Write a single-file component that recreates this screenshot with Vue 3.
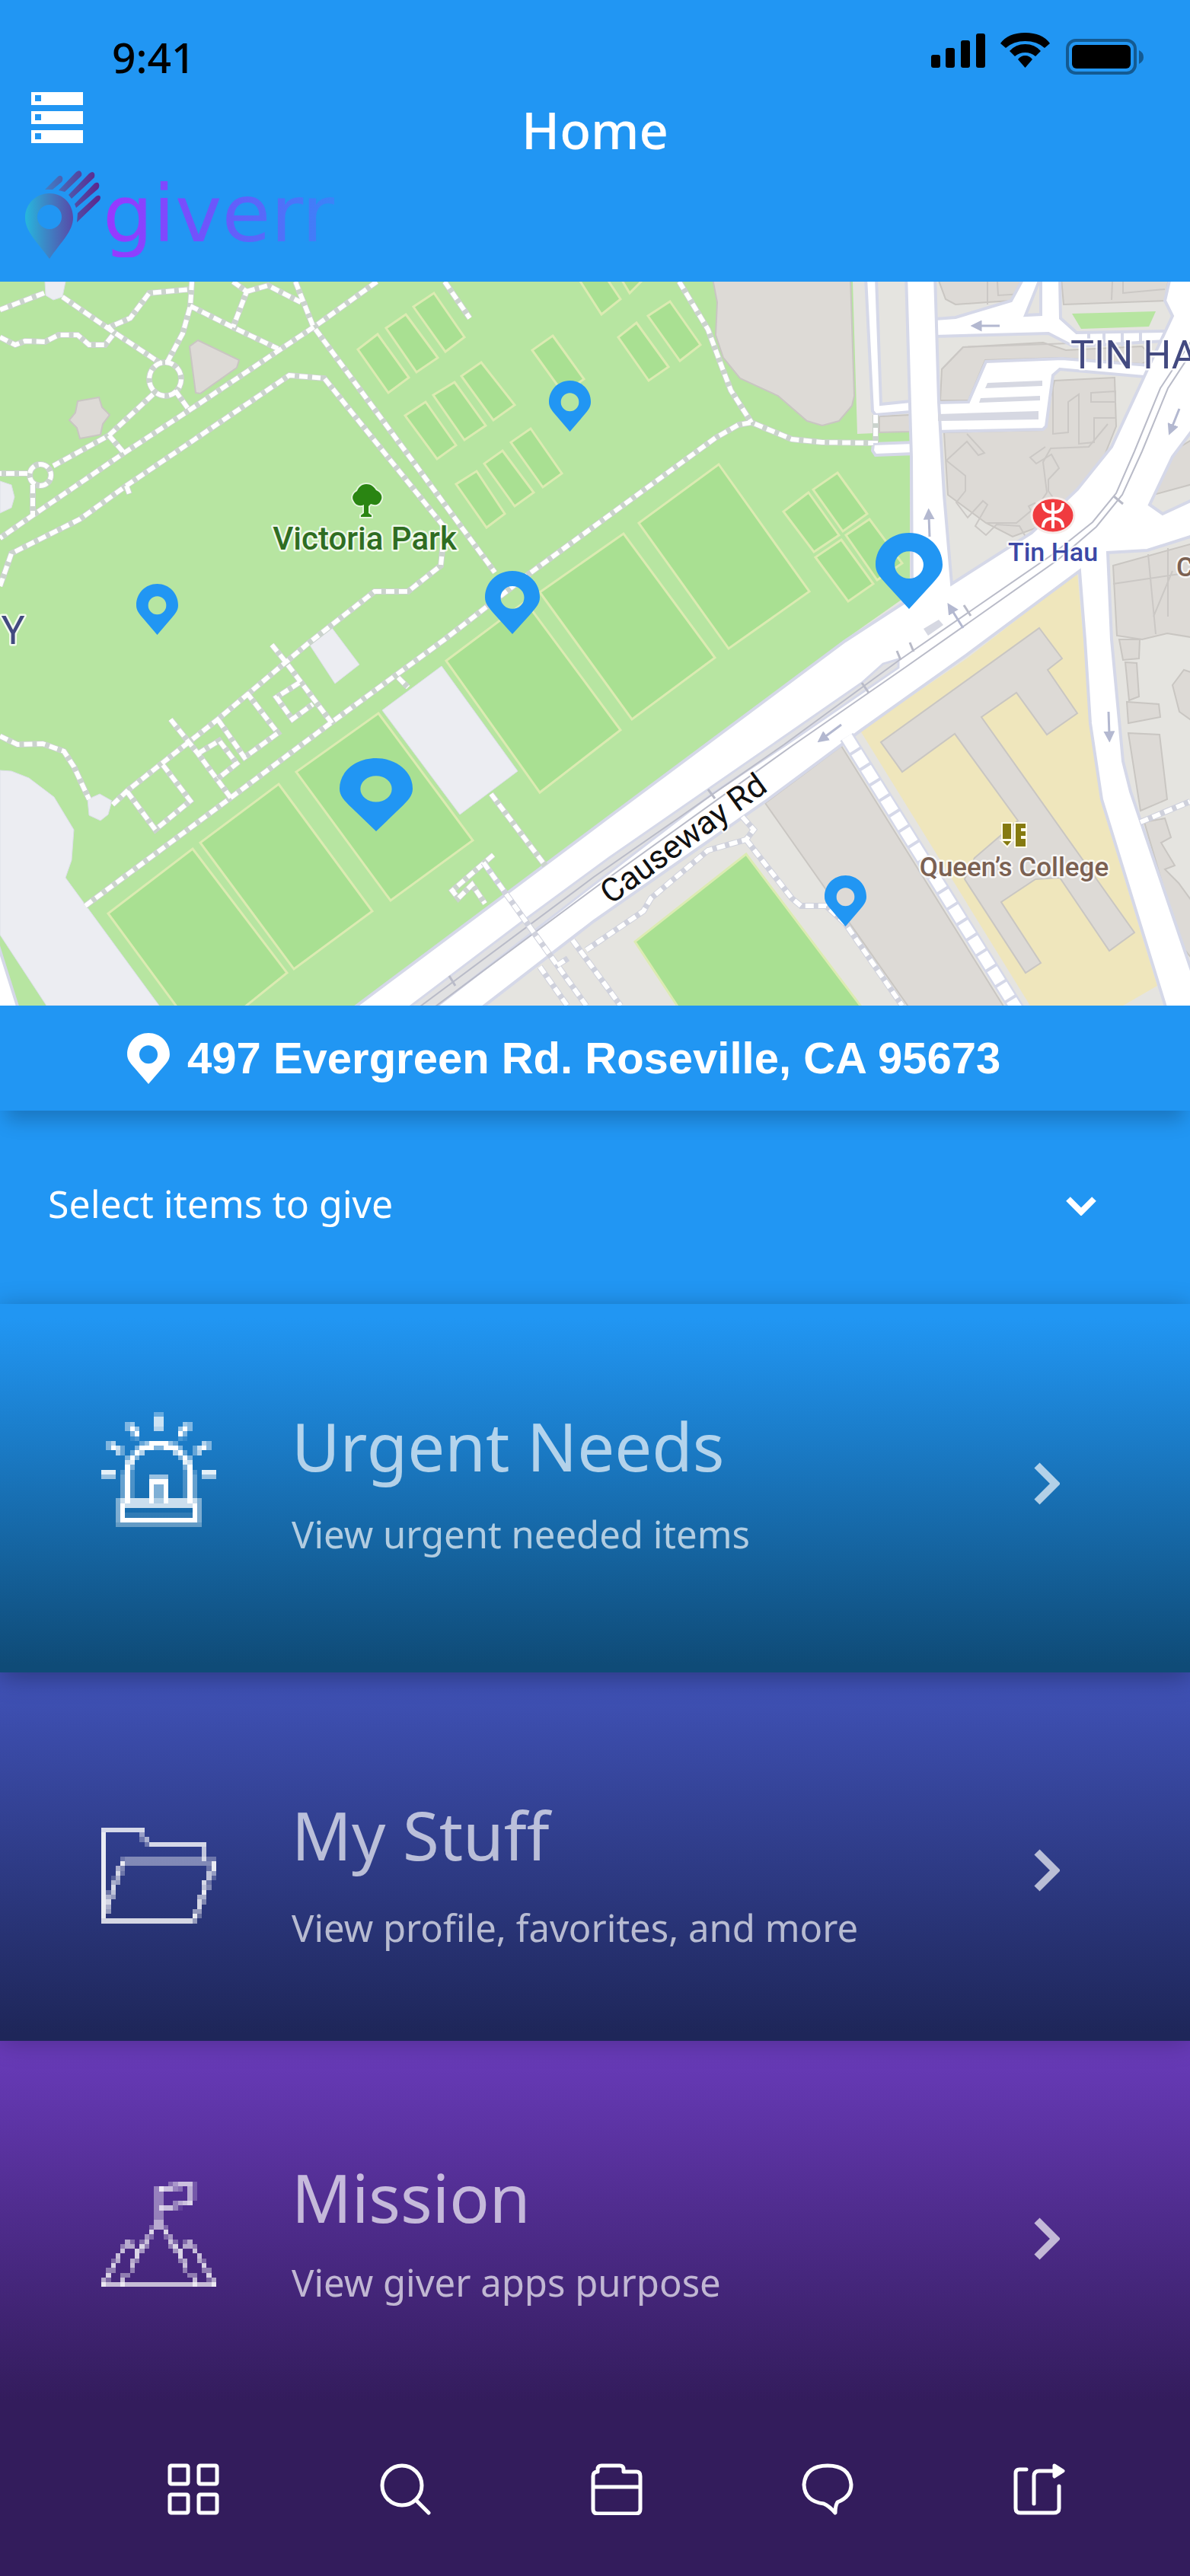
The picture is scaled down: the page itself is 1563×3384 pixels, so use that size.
<script setup>
import { ref } from 'vue'

const giving = ref('')

const mirror = (rows) => rows.map((row) => row + [...row].reverse().join(''))

// Pixel-art glyphs on a 24 x 30 grid: each digit is the opacity of one cell.
const siren = mirror([
  '000000000003',
  '000000000007',
  '000004500007',
  '000004950006',
  '000000490000',
  '000000120000',
  '046000003599',
  '049730049994',
  '000630396000',
  '000004940000',
  '000007800000',
  '000009400000',
  '888029200000',
  '555039200055',
  '000039200099',
  '000039200094',
  '000039200094',
  '000039200094',
  '000479777796',
  '000497777777',
  '000490000000',
  '000491111111',
  '000499999999',
  '000333333333',
])

const folder = [
  '888888888000000000000000',
  '900000005000000000000000',
  '900000003600000000000000',
  '900000000388888888888800',
  '900000000000000000000700',
  '900000000000000000000700',
  '900034444444444444444833',
  '900094444444444444444449',
  '900640000000000000000039',
  '900830000000000000000075',
  '902600000000000000000072',
  '906500000000000000000830',
  '908000000000000000000740',
  '937000000000000000000900',
  '965000000000000000006600',
  '980000000000000000008400',
  '960000000000000000008000',
  '950000000000000000055000',
  '900000000000000000093000',
  '888888888888888888850000',
]

const summit = [
  '000000000000003577720000',
  '000000000004977430620000',
  '000000000004400000620000',
  '000000000004400000620000',
  '000000000004400467800000',
  '000000000004877410000000',
  '000000000004400000000000',
  '000000000004400000000000',
  ...mirror([
    '000000000006',
    '000000000036',
    '000000000080',
    '000000000530',
    '000006303700',
    '000046608400',
    '000070085000',
    '000700080000',
    '003600640000',
    '008000700000',
    '044000400000',
    '080044000000',
    '630070000000',
    '977797777777',
  ]),
]

const toCells = (rows, top) =>
  rows.flatMap((row, y) =>
    [...row]
      .map((level, x) => ({ x, y: y + top, o: Number(level) / 9 }))
      .filter((cell) => cell.o > 0),
  )

const cards = [
  { id: 'urgent', title: 'Urgent Needs', note: 'View urgent needed items', cells: toCells(siren, 0) },
  { id: 'stuff', title: 'My Stuff', note: 'View profile, favorites, and more', cells: toCells(folder, 6) },
  { id: 'mission', title: 'Mission', note: 'View giver apps purpose', cells: toCells(summit, 3) },
]

const pitches = [
  '253,1115 377,1278 300,1340 245,1340 142,1200',
  '366,1030 489,1197 386,1273 263,1107',
  '497,937 621,1104 513,1183 389,1014',
  '586,868 690,790 815,959 709,1041',
  '709,778 819,701 939,864 830,945',
  '944,610 1063,777 957,852 839,687',
  '1100,621 1139,675 1107,698 1068,643',
  '1062,647 1102,703 1069,725 1029,672',
  '1142,682 1185,740 1152,762 1111,703',
  '1105,709 1147,767 1114,790 1071,732',
  '570,385 610,443 585,462 543,403',
  '533,413 575,470 547,489 507,431',
  '496,439 537,496 510,516 470,459',
  '632,476 676,532 648,552 606,494',
  '597,502 638,559 610,578 569,519',
  '559,528 599,585 574,603 532,546',
  '697,563 738,622 713,640 671,581',
  '660,592 701,647 676,665 636,609',
  '626,619 663,675 639,693 599,636',
  '726,441 767,498 740,517 699,460',
  '880,396 920,453 893,474 851,415',
  '836,424 878,482 852,500 812,443',
  '756,360 790,413 815,393 793,360',
  '812,360 827,385 852,360',
]

const plazas = [
  '0,1012 15,1013 38,1022 71,1047 97,1090 94,1130 86,1153 209,1321 61,1321 0,1228',
  '580,875 680,1013 604,1070 502,933',
  '436,825 472,873 440,898 404,843',
  '59,370 86,370 82,390 70,394 60,388',
  '0,632 15,637 19,653 15,667 0,674',
  '115,1050 131,1043 147,1052 142,1070 132,1078 117,1071',
]

const buildings = [
  '936,366 942,397 940,440 950,470 972,497 1022,520 1060,553 1080,559 1102,553 1119,533 1122,520 1117,366',
  '260,447 314,473 311,483 263,517 257,516 249,455',
  '102,527 130,522 134,535 144,545 135,557 132,571 105,576 101,562 91,552 99,542',
  '1155,547 1195,545 1195,567 1155,568',
  '1232,366 1346,366 1328,395 1297,397 1255,400 1242,393',
  '1394,366 1535,366 1530,395 1397,400',
  '1237,485 1265,456 1370,450 1400,460 1500,455 1515,470 1500,478 1393,470 1294,473 1272,526 1235,526',
  '1240,568 1370,565 1385,500 1464,496 1466,560 1450,600 1430,630 1405,665 1370,690 1330,705 1295,687 1245,650',
  '1515,650 1545,590 1570,575 1570,635',
  '1462,743 1570,713 1570,838 1533,832 1500,840 1467,835',
  '1470,840 1497,840 1496,865 1475,867',
  '1478,870 1493,871 1496,915 1483,920',
  '1480,922 1522,925 1524,942 1482,950',
  '1482,963 1523,965 1533,1050 1498,1065',
  '1503,1080 1530,1075 1538,1100 1525,1107 1543,1137 1530,1142 1548,1160 1570,1190 1570,1265 1550,1240',
  '1540,900 1555,880 1570,885 1570,950 1549,935',
  '1105,980 1320,1325 1195,1325 1005,1055',
]

const buildingLines = [
  'M1297 370v30M1310 370l1 18 32-2M1461 370l-1 24M1475 370v15l55-5',
  'M1237 485l28-29 140-5',
  'M1270 570l23 25-8 3-15-18-27 25 25 20v20l-12 15 15 20 20-22 6 5-16 28 14 12 14-14 30 2 8 14 18-14-14-26 8-4 18 18 14-14-14-20v-15l14-15-10-18-20 12-8-8 20-14',
  'M1295 687h40l30-25 10-15-5-40 10-18 50-2 25-30',
  'M1383 500v70l20-2v-40l14-10v65l20-2v-32h28M1433 516l32-2v14h-32z',
  'M1462 767l101-15M1508 728l10 105M1540 750l-25 60M1534 720v90',
]

const paths = [
  'M0 407L58 385M82 390L143 432 212 478',
  'M0 443L20 453 33 448 59 449 77 440 102 440 117 453 138 453 150 438 143 430 171 418 196 385 250 380',
  'M252 370L250 402 240 438 219 477M250 402L306 430 365 458',
  'M306 370L324 383 306 430M324 383L352 375 395 397',
  'M388 370L411 428 650 752M495 370L416 427 250 538 163 595 43 677 0 707',
  'M217 476a21 22 0 1 1 0 44a21 22 0 1 1 0-44M230 513L248 538',
  'M201 518L143 572 70 612M36 622L0 622M143 572L163 595M43 637L43 677M53 610a14 14 0 1 1 0 28a14 14 0 1 1 0-28',
  'M0 770L15 727 105 682 166 638 380 493 426 497 584 693 579 743 536 777 492 777 405 845 286 945 168 1038 148 1057M166 638l4 11',
  'M584 370L617 418',
  'M112 1190L303 1048 434 950 584 840 696 753 940 575 970 558 987 555 1040 577 1080 581 1147 582',
  'M892 370L930 433 950 487 960 513 987 555M1150 545L1150 582',
  'M357 847L374 868 436 950M393 897L363 916 384 945 411 925',
  'M324 910L365 963 321 995 286 945M224 945L260 990 303 1048M260 990L288 973 311 1003 286 1023',
  'M214 1005L250 1052 204 1090 167 1040M523 890L536 903',
  'M0 967L23 978 56 977 84 987 97 1007 117 1050',
  'M645 1043L716 1137M648 1123L594 1170 602 1180 620 1162 637 1187',
].join('')

const streetPaths = [
  'M635 1133L770 1321M709 1270L745 1321M752 1235L815 1321M732 1268l14-9',
  'M975 1073L990 1090 980 1103 930 1117 855 1180 845 1197 770 1248',
  'M980 1103L1040 1180 1052 1190 1085 1190 1110 1213 1185 1321',
  'M1498 1080L1563 1053',
].join('')

const arrows = [
  'M1313 428L1285 428',
  'M1221 705L1220 678',
  'M1105 952L1082 969',
  'M1456 935L1457 965',
  'M1549 537L1539 562',
  'M1265 825L1250 801',
]

const pins = [
  { x: 721, y: 500, w: 55, h: 67 },
  { x: 179, y: 767, w: 55, h: 67 },
  { x: 637, y: 750, w: 72, h: 83 },
  { x: 1150, y: 700, w: 88, h: 100 },
  { x: 446, y: 996, w: 96, h: 96 },
  { x: 1083, y: 1150, w: 55, h: 67 },
]
</script>

<template>
  <div class="app">
    <header class="top">
      <div class="status">
        <span class="clock">9:41</span>
        <svg class="signals" viewBox="0 0 280 60" aria-hidden="true">
          <rect x="0" y="34" width="12" height="17" rx="3" />
          <rect x="19" y="25" width="12" height="26" rx="3" />
          <rect x="39" y="15" width="12" height="36" rx="3" />
          <rect x="59" y="6" width="12" height="45" rx="3" />
          <path d="M91 19Q101 5 123.500 5T156 19L149 25Q139 16 123.500 16T98 25Z" />
          <path d="M103 29Q111 20 123.500 20T144 29L137 36Q131 31 123.500 31T110 36Z" />
          <path d="M114 40Q118 35 123.500 35T133 40L123.500 51Z" />
          <rect class="cell-edge" x="179" y="15" width="89" height="43" rx="11" />
          <rect x="185" y="21" width="77" height="31" rx="6" />
          <path class="cell-cap" d="M273 28q6 3 6 9t-6 9z" />
        </svg>
      </div>
      <div class="bar">
        <button class="menu" type="button" aria-label="Menu">
          <svg viewBox="0 0 68 68" aria-hidden="true">
            <path
              fill-rule="evenodd"
              d="M0 0h68v17H0zM5 4v8h8V4zM0 25h68v17H0zM5 29v8h8v-8zM0 50h68v17H0zM5 54v8h8v-8z"
            />
          </svg>
        </button>
        <h1>Home</h1>
      </div>
      <a class="brand" href="#home">
        <svg viewBox="0 0 102 118" aria-hidden="true">
          <defs>
            <linearGradient id="brandPin" x1="0" x2="1" y1="0" y2="0">
              <stop offset="0" stop-color="#27b6dd" />
              <stop offset="1" stop-color="#584aa8" />
            </linearGradient>
            <linearGradient id="brandHand" gradientUnits="userSpaceOnUse" x1="20" x2="102" y1="0" y2="0">
              <stop offset="0" stop-color="#3f86c9" />
              <stop offset="1" stop-color="#5f2089" />
            </linearGradient>
          </defs>
          <path
            fill="url(#brandPin)"
            fill-rule="evenodd"
            d="M32 30C14 30 0 44 0 62c0 18 16 32 32 54c15-22 31-36 31-54C63 44 50 30 32 30ZM32 45a16 16 0 1 1 0 32a16 16 0 1 1 0-32Z"
          />
          <path
            fill="url(#brandHand)"
            d="M26 25L43 8q4-3 6 1q1 3-1 6L36 25ZM44 26L67 2q5-4 7 1q1 3-1 5L52 28ZM57 32L84 4q5-4 7 0q1 4-1 6L61 37ZM65 44L91 17q5-3 6 1q1 3-1 6L67 49ZM69 56L93 34q5-3 6 1q0 3-2 5L68 68Z"
          />
        </svg>
        <span class="word">giverr</span>
      </a>
    </header>

    <svg class="map" viewBox="0 370 1563 951" role="img" aria-label="Map of drop-off points">
      <defs>
        <marker id="tip" viewBox="0 0 10 10" refX="3" refY="5" markerWidth="15" markerHeight="15" markerUnits="userSpaceOnUse" orient="auto">
          <path d="M0 0L10 5 0 10z" fill="#b3b8d0" />
        </marker>
      </defs>
      <rect class="park" y="370" width="1563" height="951" />
      <polygon
        class="land"
        points="1120,370 1126,570 1195,567 1195,780 1110,840 800,1073 469,1321 1563,1321 1563,370"
      />
      <polygon class="park" points="1157,571 1193,569 1193,580 1157,581" />
      <polygon v-for="p in plazas" :key="p" class="plaza" :points="p" />
      <polygon class="road" points="-6,1230 24,1325 -6,1325" />
      <polygon v-for="p in pitches" :key="p" class="pitch" :points="p" />
      <polygon class="pitch" points="980,1122 1133,1325 892,1325 834,1237" />
      <polygon
        class="school"
        points="1415,752 1423,840 1432,950 1445,1050 1520,1295 1475,1321 1353,1321 1130,960 1270,865"
      />
      <polygon v-for="b in buildings" :key="b" class="building" :points="b" />
      <polygon
        class="building"
        points="1365,825 1395,865 1376,880 1415,937 1375,965 1335,910 1289,942 1490,1225 1457,1249 1392,1153 1360,1155 1315,1185 1367,1265 1347,1278 1267,1155 1280,1127 1337,1078 1254,964 1185,1014 1157,975"
      />
      <path v-for="l in buildingLines" :key="l" class="outline" :d="l" />
      <polygon class="park" points="1408,412 1518,409 1509,429 1420,432" />

      <g class="road">
        <polygon points="1137,364 1151,364 1157,531 1196,527 1196,541 1150,545 1146,540" />
        <polygon points="1147,583 1200,581 1200,596 1150,598 1146,592" />
        <polygon points="1228,419 1255,417 1328,395 1345,364 1367,364 1347,414 1367,413 1367,364 1392,364 1393,418 1414,437 1530,435 1530,448 1410,455 1377,438 1228,442" />
        <polygon points="1230,529 1272,528 1295,475 1395,471 1510,480 1503,495 1392,485 1383,493 1374,560 1370,564 1230,567" />
      </g>
      <path class="street" d="M1430 435v20M1450 435v20M1474 435v20M1498 435v15" />
      <path
        class="road"
        d="M462 1326L800 1073 1110 842 1198 785 1197 600 1190 360H1228L1233 528 1240 650 1250 767 1355 700 1415 643 1460 587 1505 490 1540 415 1530 395 1538 360H1570V560L1540 600 1510 663 1527 675 1570 655V703L1507 723 1455 726 1460 840 1475 1000 1485 1040 1570 1290V1326H1532L1447 1050 1432 950 1425 840 1418 750 1270 860 1130 960 1005 1053 780 1210 630 1326Z"
      />
      <path class="stall" d="M1297 503l72-3v7l-75 3zM1288 523l78-3v6l-80 3zM1232 544l132-4v11l-132 2z" />
      <path
        class="median"
        d="M535 1325L683 1213 800 1127 930 1037 1132 897 1160 872 1180 866 1180 877 1030 980 935 1043 780 1162 570 1325Z"
      />
      <path
        class="tram"
        d="M548 1325L780 1152 1030 978 1180 868 1380 730 1435 686 1466 648 1490 593 1524 510 1570 440M568 1325L790 1160 1040 980 1190 876 1390 735 1440 692 1474 650 1500 593 1534 510 1570 455"
      />
      <path class="tick" d="M1266 795l9 14M1463 652l12 10M1132 897l9 13M930 1037l9 12M590 1282l8 13M1195 844l5 12M1178 855l5 12" />
      <path class="stall" d="M1213 826l20-12 6 7-20 14z" />

      <path class="path-edge" :d="paths" />
      <path class="path" :d="paths" />
      <path class="path-edge lane" :d="streetPaths" />
      <path class="path" :d="streetPaths" />
      <path class="walk-edge" d="M1112 968L1336 1326" />
      <path class="walk" d="M1112 968L1336 1326" />
      <path v-for="a in arrows" :key="a" class="arrow" :d="a" marker-end="url(#tip)" />

      <g class="tree">
        <path d="M481 636c8 0 11 5 13 8c7 3 9 9 6 14c-3 6-8 6-13 4l-3 3v9l4 3v2h-14v-2l4-3v-11c-6 3-11 0-13-4c-4-6-1-11 4-14c2-5 6-9 12-9z" />
      </g>
      <g class="metro">
        <ellipse cx="1383" cy="677" rx="28" ry="23" />
        <path d="M1383 660v34M1370 661q0 12 13 12t13-12M1370 693q0-12 13-12t13 12" />
      </g>
      <path class="supplies" d="M1317 1082h11v20h-11zM1317 1105h11l-5 6zM1334 1082h13v6h-6v4h6v6h-6v4h6v10h-13z" />

      <text class="label park-name" x="479" y="722" text-anchor="middle">Victoria Park</text>
      <text class="label district" x="17" y="846" text-anchor="middle">Y</text>
      <text class="label district" x="1406" y="484">TIN HAU</text>
      <text class="label station" x="1383" y="737" text-anchor="middle">Tin Hau</text>
      <text class="label college" x="1332" y="1151" text-anchor="middle">Queen’s College</text>
      <text class="label college" x="1545" y="757">C</text>
      <text class="label road-name" transform="translate(802 1189) rotate(-36)">Causeway Rd</text>

      <svg
        v-for="p in pins"
        :key="p.x"
        :x="p.x"
        :y="p.y"
        :width="p.w"
        :height="p.h"
        viewBox="0 0 100 120"
        preserveAspectRatio="none"
      >
        <path
          class="pin"
          fill-rule="evenodd"
          d="M50 120L17 82C6 69 0 62 0 50C0 22 22 0 50 0S100 22 100 50C100 62 94 69 83 82ZM50 29a21 21 0 1 0 0 43a21 21 0 1 0 0-43Z"
        />
      </svg>
    </svg>

    <address class="address">
      <svg viewBox="0 0 100 120" aria-hidden="true">
        <path
          fill-rule="evenodd"
          d="M50 120L17 82C6 69 0 62 0 50C0 22 22 0 50 0S100 22 100 50C100 62 94 69 83 82ZM50 29a21 21 0 1 0 0 43a21 21 0 1 0 0-43Z"
        />
      </svg>
      <span>497 Evergreen Rd. Roseville, CA 95673</span>
    </address>

    <div class="picker">
      <select v-model="giving" aria-label="Select items to give">
        <option value="">Select items to give</option>
      </select>
      <svg viewBox="0 0 40 26" aria-hidden="true"><path d="M3 4L20 21 37 4" /></svg>
    </div>

    <main class="cards">
      <a v-for="card in cards" :key="card.id" class="card" :class="card.id" :href="'#' + card.id">
        <svg class="glyph" viewBox="0 0 24 30" shape-rendering="crispEdges" aria-hidden="true">
          <rect
            v-for="c in card.cells"
            :key="c.x + '-' + c.y"
            :x="c.x"
            :y="c.y"
            width="1"
            height="1"
            :fill-opacity="c.o"
          />
        </svg>
        <span class="words">
          <span class="title">{{ card.title }}</span>
          <span class="note">{{ card.note }}</span>
        </span>
        <svg class="chevron" viewBox="0 0 34 56" aria-hidden="true"><path d="M4 4L28 28 4 52" /></svg>
      </a>
    </main>

    <nav class="tabs" aria-label="Main">
      <a href="#dashboard" aria-label="Dashboard">
        <svg viewBox="0 0 68 68">
          <rect x="3" y="3" width="24" height="24" rx="2" />
          <rect x="41" y="3" width="24" height="24" rx="2" />
          <rect x="3" y="41" width="24" height="24" rx="2" />
          <rect x="41" y="41" width="24" height="24" rx="2" />
        </svg>
      </a>
      <a href="#search" aria-label="Search">
        <svg viewBox="0 0 68 68">
          <circle cx="30" cy="29" r="26" />
          <path d="M48 48L65 65" />
        </svg>
      </a>
      <a href="#items" aria-label="Items">
        <svg viewBox="0 0 68 68">
          <path d="M3 17Q3 11 9 11V8Q9 3 14 3H38Q43 3 43 8V11H60Q65 11 65 17V60Q65 66 59 66H9Q3 66 3 60ZM3 31H65" />
        </svg>
      </a>
      <a href="#messages" aria-label="Messages">
        <svg viewBox="0 0 68 68">
          <path d="M29 53Q36 56 44 65Q44 56 47 51Q65 44 65 28Q63 3 34 3Q5 3 3 28Q4 50 29 53Z" />
        </svg>
      </a>
      <a href="#share" aria-label="Share">
        <svg viewBox="0 0 68 68">
          <path d="M17 8H8Q3 8 3 13V59Q3 65 9 65H53Q60 65 60 59V30M27 53V17Q27 10 34 10H54" />
          <path class="solid" d="M54 3L65 10 54 17Z" />
        </svg>
      </a>
    </nav>
  </div>
</template>

<style>
body {
  margin: 0;
  background: #331c5c;
}
</style>

<style scoped>
.app {
  display: flex;
  flex-direction: column;
  min-height: 100vh;
  overflow: hidden;
  font-family: "Noto Sans", "Open Sans", sans-serif;
  color: #fff;
}

a {
  color: inherit;
  text-decoration: none;
}

svg {
  display: block;
}

.top {
  box-sizing: border-box;
  min-height: 370px;
  background: #2196f3;
}

.status {
  display: flex;
  justify-content: space-between;
  height: 110px;
  padding: 38px 60px 0 147px;
  box-sizing: border-box;
  color: #000;
}

.clock {
  font-size: 55px;
  font-weight: 500;
  line-height: 74px;
}

.signals {
  width: 280px;
  height: 60px;
}

.cell-edge {
  fill: none;
  stroke: rgba(0, 0, 0, 0.4);
  stroke-width: 4;
}

.cell-cap {
  fill: rgba(0, 0, 0, 0.4);
}

.bar {
  display: grid;
  grid-template-columns: 1fr auto 1fr;
  align-items: start;
  height: 114px;
  padding: 0 30px 0 41px;
}

.bar {
  padding-right: 41px;
  padding-left: 41px;
}

.menu {
  width: 68px;
  margin-top: 11px;
  padding: 0;
  border: 0;
  background: none;
  fill: #fff;
}

h1 {
  margin: 0;
  font-size: 67px;
  font-weight: 500;
  line-height: 120px;
}

.brand {
  display: flex;
  align-items: flex-start;
  padding-left: 33px;
}

.brand svg {
  width: 102px;
  height: 118px;
}

.word {
  font-family: "DejaVu Sans", sans-serif;
  font-size: 104px;
  line-height: 114px;
  background: linear-gradient(90deg, #9a37ff, #6a58fb 50%, #3a84f8);
  background-clip: text;
  color: transparent;
}

.map {
  width: 100%;
  height: auto;
}

.park {
  fill: #b7e5a1;
}

.land {
  fill: #e5e4e0;
}

.plaza {
  fill: #ecedf2;
  stroke: #dcdfe8;
  stroke-width: 1;
}

.pitch {
  fill: #a9e092;
  stroke: #dcebb2;
  stroke-width: 3;
}

.school {
  fill: #efe6bc;
}

.building {
  fill: #dddad6;
  stroke: #c9c6c2;
  stroke-width: 2;
}

.outline {
  fill: none;
  stroke: #cbc8c5;
  stroke-width: 2;
}

.road {
  fill: #fff;
  stroke: #d5d8e8;
  stroke-width: 4;
}

.street {
  fill: none;
  stroke: #d5d8e8;
  stroke-width: 4;
}

.stall {
  fill: #d6d8e2;
}

.median {
  fill: #e1e1e2;
  stroke: #d5d8e8;
  stroke-width: 3;
}

.tram,
.tick {
  fill: none;
  stroke: #b9bbc8;
  stroke-width: 2;
}

.tick {
  stroke-width: 3;
}

.path-edge {
  fill: none;
  stroke: #cbd3cd;
  stroke-width: 8;
}

.lane {
  stroke: #cfd1dc;
}

.path {
  fill: none;
  stroke: #fff;
  stroke-width: 6;
  stroke-dasharray: 11 6;
}

.walk-edge {
  fill: none;
  stroke: #d5d8e8;
  stroke-width: 20;
}

.walk {
  fill: none;
  stroke: #fff;
  stroke-width: 15;
  stroke-dasharray: 20 4;
}

.arrow {
  fill: none;
  stroke: #b3b8d0;
  stroke-width: 3;
}

.tree path {
  fill: #2a8512;
  stroke: #e4f5dc;
  stroke-width: 4;
  paint-order: stroke;
}

.metro ellipse {
  fill: #f03b3f;
  stroke: #f6ebe9;
  stroke-width: 3;
}

.metro path {
  fill: none;
  stroke: #fff;
  stroke-width: 4;
}

.supplies {
  fill: #857a10;
  stroke: #fffbe9;
  stroke-width: 4;
  paint-order: stroke;
}

.label {
  font-family: Roboto, "Liberation Sans", sans-serif;
  font-size: 36px;
  font-weight: 500;
  stroke: rgba(255, 255, 255, 0.8);
  stroke-width: 5;
  stroke-linejoin: round;
  paint-order: stroke;
}

.park-name {
  font-size: 42px;
  fill: #2f6d22;
}

.district {
  font-size: 52px;
  font-weight: 400;
  fill: #434a80;
}

.station {
  font-size: 34px;
  fill: #3b48a6;
}

.college {
  font-size: 35px;
  fill: #7b6152;
}

.road-name {
  font-size: 43px;
  font-weight: 400;
  fill: #111;
}

.pin {
  fill: #2196f3;
}

.address {
  position: relative;
  z-index: 1;
  display: flex;
  align-items: center;
  gap: 23px;
  min-height: 138px;
  padding-left: 167px;
  background: #2196f3;
  box-shadow: 0 20px 24px -8px rgba(0, 0, 0, 0.22);
  font: bold 58px/70px "Liberation Sans", Arial, sans-serif;
}

.address svg {
  width: 56px;
  height: 67px;
  fill: #fff;
}

.picker {
  position: relative;
  display: flex;
  align-items: center;
  min-height: 254px;
  padding: 0 123px 4px 63px;
  box-sizing: border-box;
  background: #2196f3;
}

.picker select {
  flex: 1;
  height: 100px;
  margin-bottom: 6px;
  padding: 0;
  border: 0;
  appearance: none;
  background: none;
  color: #fff;
  font: 50px "Noto Sans", "Open Sans", sans-serif;
}

.picker select option {
  color: #000;
}

.picker svg {
  width: 40px;
  height: 26px;
  pointer-events: none;
}

.picker path,
.chevron path {
  fill: none;
  stroke: #fff;
  stroke-width: 8;
}

.cards {
  display: flex;
  flex-direction: column;
}

.card {
  position: relative;
  display: flex;
  align-items: center;
  box-sizing: border-box;
  min-height: 484px;
  padding: 36px 171px 0 133px;
}

.urgent {
  --gap: 24px;
  --lift: 12px;
  z-index: 2;
  padding-top: 0;
  padding-bottom: 12px;
  background: linear-gradient(#2196f3 4%, #0f4b77 98%);
  box-shadow: 0 6px 32px rgba(0, 0, 0, 0.3);
}

.stuff {
  --gap: 30px;
  --lift: 0px;
  z-index: 1;
  background: linear-gradient(#3f51b5 4%, #1e2659 98%);
  box-shadow: 0 2px 32px rgba(0, 0, 0, 0.22);
}

.mission {
  --gap: 20px;
  --lift: 26px;
  background: linear-gradient(#673ab7 4%, #331c5c 98%);
}

.glyph {
  flex: none;
  width: 151px;
  height: 189px;
  fill: #fff;
}

.stuff .glyph,
.mission .glyph {
  opacity: 0.9;
}

.words {
  flex: 1;
  display: flex;
  flex-direction: column;
  gap: var(--gap);
  padding: 0 0 var(--lift) 99px;
  color: rgba(255, 255, 255, 0.67);
}

.title {
  font-size: 87px;
  line-height: 120px;
}

.note {
  font-size: 49px;
  line-height: 64px;
}

.chevron {
  flex: none;
  width: 34px;
  height: 56px;
  opacity: 0.67;
}

.chevron path {
  stroke-width: 10;
}

.tabs {
  display: flex;
  flex: 1;
  align-items: center;
  justify-content: space-between;
  box-sizing: border-box;
  min-height: 220px;
  padding: 0 164px 10px 220px;
  background: #331c5c;
}

.tabs svg {
  width: 68px;
  height: 68px;
  fill: none;
  stroke: #fff;
  stroke-width: 5;
  stroke-linecap: round;
  stroke-linejoin: round;
}

.tabs .solid {
  fill: #fff;
}
</style>
